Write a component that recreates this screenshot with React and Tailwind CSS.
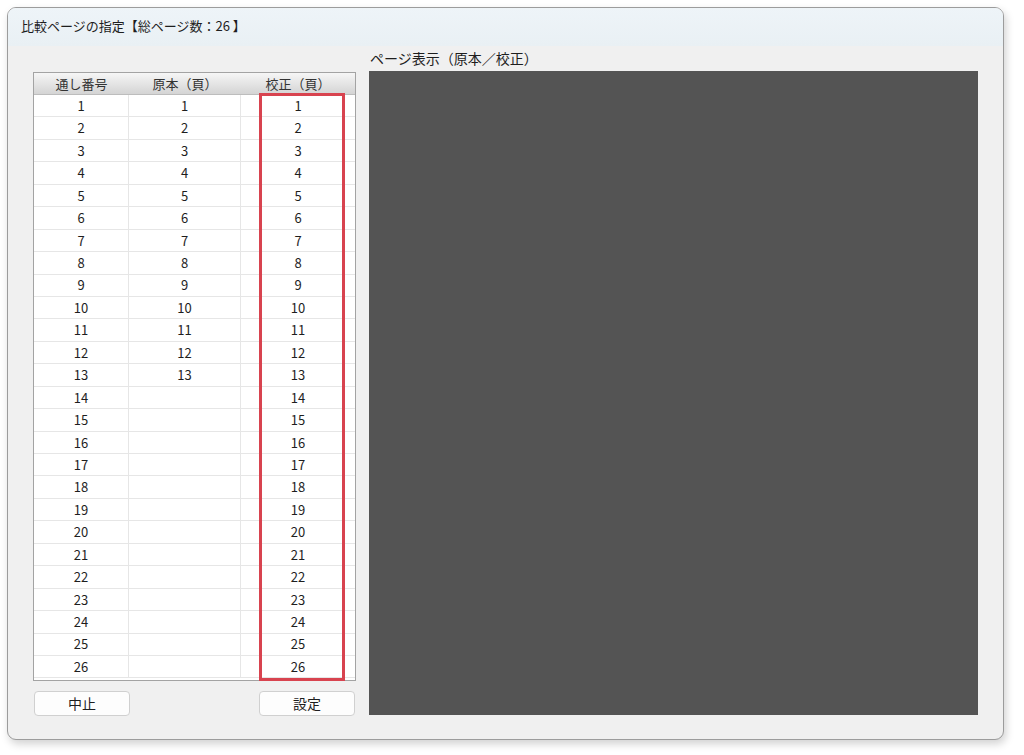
const rows = Array.from({ length: 26 }, (_, i) => i + 1);

const font = { fontFamily: '"Noto Sans CJK JP", "Noto Sans", sans-serif' };

export default function App() {
  return (
    <div className="w-[1024px] h-[755px] bg-white pl-[7px] pt-[7px]" style={font}>
      <div className="w-[997px] h-[733px] rounded-[9px] border border-[#9c9c9c] bg-[#f0f0f0] shadow-[2px_4px_8px_rgba(0,0,0,0.18)] flex flex-col overflow-hidden text-[#1e1e1e]">
        {/* Title */}
        <div className="h-[38px] bg-gradient-to-b from-[#eef4f8] to-[#e9f0f4] flex items-center pb-[3px] pl-[13px] text-[13px]">
          比較ページの指定【総ページ数：26 】
        </div>
        {/* Body */}
        <div className="flex flex-1 pl-[25px]">
          {/* Left */}
          <div className="w-[323px] pt-[26px] flex flex-col">
            <div className="relative border border-[#a3a3a3] bg-white h-[609px]">
              <div className="grid grid-cols-[95px_112px_114px] h-[22px] bg-gradient-to-b from-[#f6f6f6] to-[#d4d4d4] border-b border-[#bdbdbd] text-[13px] text-[#333]">
                <div className="flex items-center justify-center">通し番号</div>
                <div className="flex items-center justify-center">原本（頁）</div>
                <div className="flex items-center justify-center">校正（頁）</div>
              </div>
              {rows.map((n) => (
                <div key={n} className="grid grid-cols-[95px_112px_114px] h-[22.45px] border-b border-[#e6e6e6] text-[13px] last:border-b-0">
                  <div className="flex items-center justify-center border-r border-[#e6e6e6]">{n}</div>
                  <div className="flex items-center justify-center border-r border-[#e6e6e6]">{n <= 13 ? n : ''}</div>
                  <div className="flex items-center justify-center">{n}</div>
                </div>
              ))}
              <div className="absolute left-[225px] top-[20px] w-[86px] h-[588px] border-[3px] border-[#d8434f]" />
            </div>
            <div className="flex justify-between px-[1px] mt-[10px]">
              <button className="w-[96px] h-[25px] rounded-[4px] border border-[#d0d0d0] bg-[#fdfdfd] text-[14px] flex items-center justify-center">中止</button>
              <button className="w-[96px] h-[25px] rounded-[4px] border border-[#d0d0d0] bg-[#fdfdfd] text-[14px] flex items-center justify-center">設定</button>
            </div>
          </div>
          {/* Right */}
          <div className="ml-[13px] flex flex-col">
            <div className="h-[25px] flex items-center pl-[1px] text-[14px]">ページ表示（原本／校正）</div>
            <div className="w-[609px] h-[644px] bg-[#545454]" />
          </div>
        </div>
      </div>
    </div>
  );
}
